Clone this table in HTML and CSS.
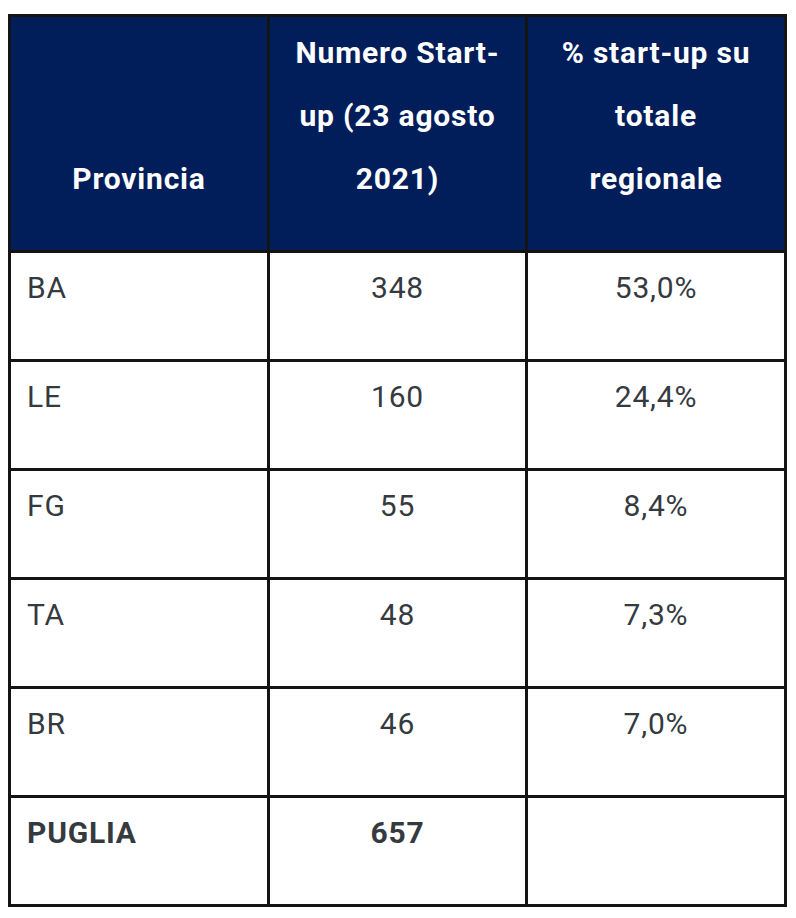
FILE: index.html
```html
<!DOCTYPE html>
<html lang="it">
<head>
<meta charset="utf-8">
<title>Start-up Puglia</title>
<link rel="stylesheet" href="styles.css">
</head>
<body>
<table class="stats">
  <colgroup>
    <col class="c1">
    <col class="c2">
    <col class="c3">
  </colgroup>
  <thead>
    <tr>
      <th>Provincia</th>
      <th>Numero Start-up (23 agosto 2021)</th>
      <th>% start-up su totale regionale</th>
    </tr>
  </thead>
  <tbody>
    <tr><td>BA</td><td class="num">348</td><td class="num">53,0%</td></tr>
    <tr><td>LE</td><td class="num">160</td><td class="num">24,4%</td></tr>
    <tr><td>FG</td><td class="num">55</td><td class="num">8,4%</td></tr>
    <tr><td>TA</td><td class="num">48</td><td class="num">7,3%</td></tr>
    <tr><td>BR</td><td class="num">46</td><td class="num">7,0%</td></tr>
    <tr class="total"><td>PUGLIA</td><td class="num">657</td><td class="num"></td></tr>
  </tbody>
</table>
</body>
</html>
```

FILE: styles.css
```css
html, body {
  margin: 0;
  padding: 0;
  background: #ffffff;
}

body {
  padding: 14px 0 0 8px;
  font-family: Roboto, "Liberation Sans", Arial, sans-serif;
}

.stats {
  border-collapse: separate;
  border-spacing: 0;
  table-layout: fixed;
  width: 779px;
  box-sizing: border-box;
  border-left: 3px solid #141414;
  border-top: 3px solid #141414;
}

.c1 { width: 259px; }
.c2 { width: 258px; }
.c3 { width: 259px; }

.stats th,
.stats td {
  box-sizing: border-box;
  border-right: 3px solid #141414;
  border-bottom: 3px solid #141414;
  font-size: 30px;
  line-height: 63px;
  letter-spacing: 0.8px;
}

.stats th {
  height: 235px;
  background: #011e5b;
  color: #ffffff;
  font-weight: 700;
  text-align: center;
  vertical-align: bottom;
  padding: 4px 20px 40px;
}

.stats td {
  height: 109px;
  color: #353a3f;
  font-weight: 400;
  text-align: left;
  vertical-align: top;
  padding: 3px 16px 0 16px;
}

.stats td.num {
  text-align: center;
}

.stats .total td {
  font-weight: 700;
}
```
